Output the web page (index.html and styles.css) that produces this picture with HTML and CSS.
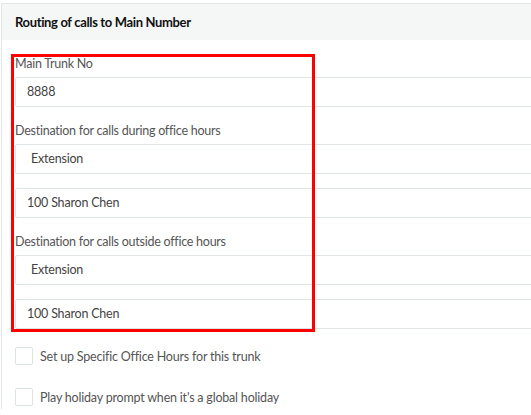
FILE: index.html
```html
<!DOCTYPE html>
<html>
<head>
<meta charset="utf-8">
<link rel="stylesheet" href="styles.css">
</head>
<body>
<div class="panel">
  <div class="panel-head">Routing of calls to Main Number</div>
  <div class="panel-body">
    <div class="group first">
      <label class="lbl">Main Trunk No</label>
      <div class="field">8888</div>
    </div>
    <div class="group">
      <label class="lbl">Destination for calls during office hours</label>
      <div class="field select">Extension</div>
    </div>
    <div class="group">
      <div class="field">100 Sharon Chen</div>
    </div>
    <div class="group">
      <label class="lbl">Destination for calls outside office hours</label>
      <div class="field select">Extension</div>
    </div>
    <div class="group">
      <div class="field">100 Sharon Chen</div>
    </div>
    <div class="check-row"><span class="box"></span><span class="check-text">Set up Specific Office Hours for this trunk</span></div>
    <div class="check-row"><span class="box"></span><span class="check-text">Play holiday prompt when it's a global holiday</span></div>
    <div class="highlight"></div>
  </div>
</div>
</body>
</html>
```
FILE: styles.css
```css
html, body {
  margin: 0;
  padding: 0;
  background: #fff;
  overflow: hidden;
}
body {
  width: 531px;
  height: 415px;
  font-family: "Lato", "Liberation Sans", sans-serif;
}
.panel {
  margin: 3px 0 0 1px;
  width: 600px;
  height: 405px;
  border-left: 1px solid #e3e7e8;
  border-top: 1px solid #e3e7e8;
}
.panel-head {
  height: 36px;
  background: #f5f7f7;
  font-weight: bold;
  font-size: 13px;
  letter-spacing: -0.35px;
  color: #111;
  line-height: 36px;
  padding-left: 13px;
}
.panel-body {
  position: relative;
  padding: 14px 0 0 13px;
}
.group {
  margin-bottom: 14px;
}
.lbl {
  display: block;
  font-size: 12.5px;
  letter-spacing: -0.25px;
  line-height: 20px;
  margin-bottom: 3px;
  color: #555;
}
.field {
  height: 28px;
  border: 1px solid #dfe4e6;
  border-radius: 2px;
  box-sizing: content-box;
  font-size: 12.5px;
  letter-spacing: -0.2px;
  line-height: 28px;
  color: #444;
  padding-left: 11px;
}
.field.select {
  padding-left: 15px;
}
.check-row {
  display: flex;
  align-items: center;
  gap: 7px;
  height: 18px;
  margin-top: 18px;
  margin-bottom: 23px;
}
.check-row + .check-row {
  margin-top: 0;
}
.box {
  width: 16px;
  height: 16px;
  border: 1px solid #dde2e5;
  border-radius: 2px;
  background: #fff;
}
.check-text {
  font-size: 12.5px;
  letter-spacing: -0.2px;
  color: #555;
}
.highlight {
  position: absolute;
  left: 9px;
  top: 14px;
  width: 304px;
  height: 278px;
  box-sizing: border-box;
  border: 3px solid #ff0000;
}
```
